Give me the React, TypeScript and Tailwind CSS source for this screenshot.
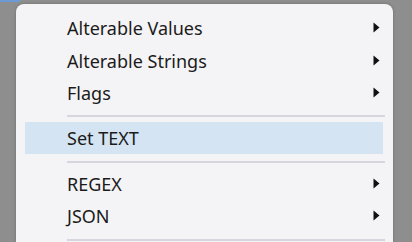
import React from "react";

const Arrow = () => (
  <svg width="7" height="11" viewBox="0 0 7 11" className="shrink-0">
    <path d="M0.5 0.5 L6.5 5.5 L0.5 10.5 Z" fill="#111" />
  </svg>
);

const Row = ({ label, sub, active }: { label: string; sub?: boolean; active?: boolean }) => (
  <div
    className={
      active
        ? "h-[32.5px] flex items-center pl-[42px] pr-[3px] bg-[#d5e4f2]"
        : "h-[32.5px] flex items-center pl-[42px] pr-[3px]"
    }
  >
    <span className="flex-1 text-[18px] leading-none text-[#1b1b1b] pt-[1px]">{label}</span>
    {sub ? <Arrow /> : null}
  </div>
);

export default function App() {
  return (
    <div
      className="w-[412px] h-[242px] overflow-hidden bg-[#8e8e8e] relative"
      style={{ fontFamily: '"Noto Sans", "Open Sans", sans-serif' }}
    >
      <div className="absolute left-0 top-0 w-[20px] h-[2px] bg-[#6b9ad6]" />
      <div className="pt-[4px] pl-[16px] pr-[19px] h-full">
        <div className="h-full rounded-t-[8px] bg-[#f4f4f6] pt-[7.5px] pl-[9px] pr-[10px] shadow-[0_0_3px_rgba(0,0,0,0.25)]">
          <Row label="Alterable Values" sub />
          <Row label="Alterable Strings" sub />
          <Row label="Flags" sub />
          <div className="h-[12.5px] pt-[6px] pl-[42px]">
            <div className="h-[2px] bg-[#d6d6df] mr-[-2px]" />
          </div>
          <Row label="Set TEXT" active />
          <div className="h-[13px] pt-[7px] pl-[42px]">
            <div className="h-[2px] bg-[#d6d6df] mr-[-2px]" />
          </div>
          <Row label="REGEX" sub />
          <Row label="JSON" sub />
          <div className="h-[13px] pt-[6.5px] pl-[42px]">
            <div className="h-[2px] bg-[#d6d6df] mr-[-2px]" />
          </div>
        </div>
      </div>
    </div>
  );
}
